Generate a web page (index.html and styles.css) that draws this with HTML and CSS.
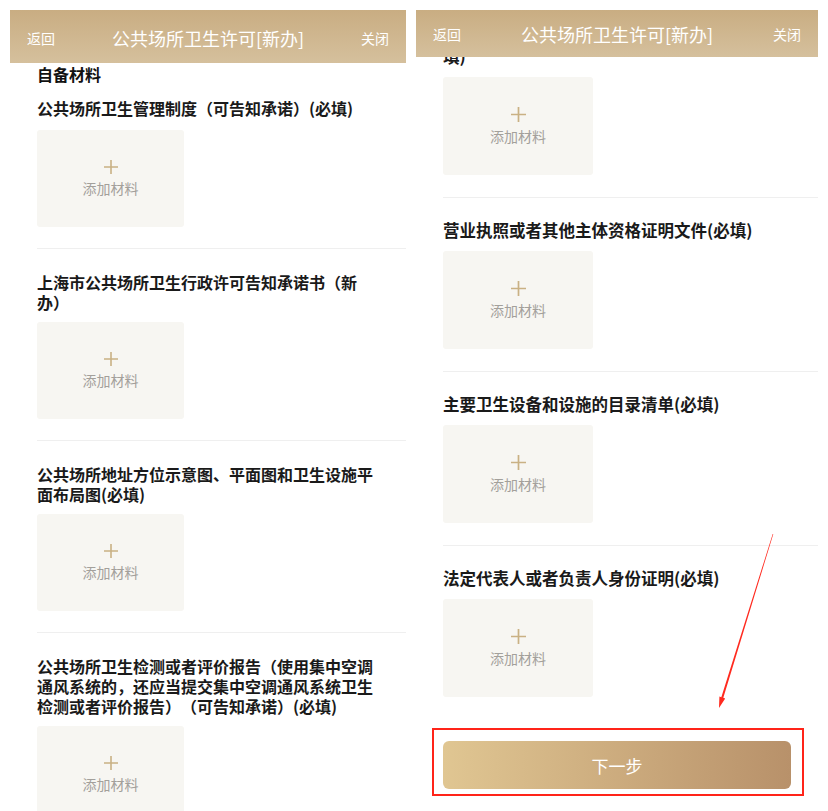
FILE: index.html
```html
<!DOCTYPE html>
<html lang="zh-CN">
<head>
    <meta charset="UTF-8">
    <meta name="viewport" content="width=device-width, initial-scale=1.0">
    <title>公共场所卫生许可[新办]</title>
    <link rel="stylesheet" href="styles.css">
</head>
<body>

<div class="page">

    <section class="phone phone-a">
        <header class="nav">
            <span class="nav-link">返回</span>
            <span class="nav-title">公共场所卫生许可[新办]</span>
            <span class="nav-link nav-right">关闭</span>
        </header>

        <div class="screen">
            <h2 class="group-title">自备材料</h2>

            <div class="item">
                <div class="item-title">公共场所卫生管理制度（可告知承诺）(必填)</div>
                <div class="upload"><svg class="plus" viewBox="0 0 14 14"><path d="M7 0V14M0 7H14"/></svg><span>添加材料</span></div>
            </div>

            <div class="item">
                <div class="item-title">上海市公共场所卫生行政许可告知承诺书（新办）</div>
                <div class="upload"><svg class="plus" viewBox="0 0 14 14"><path d="M7 0V14M0 7H14"/></svg><span>添加材料</span></div>
            </div>

            <div class="item">
                <div class="item-title">公共场所地址方位示意图、平面图和卫生设施平面布局图(必填)</div>
                <div class="upload"><svg class="plus" viewBox="0 0 14 14"><path d="M7 0V14M0 7H14"/></svg><span>添加材料</span></div>
            </div>

            <div class="item">
                <div class="item-title">公共场所卫生检测或者评价报告（使用集中空调通风系统的，还应当提交集中空调通风系统卫生检测或者评价报告）（可告知承诺）(必填)</div>
                <div class="upload"><svg class="plus" viewBox="0 0 14 14"><path d="M7 0V14M0 7H14"/></svg><span>添加材料</span></div>
            </div>
        </div>
    </section>

    <section class="phone phone-b">
        <header class="nav">
            <span class="nav-link">返回</span>
            <span class="nav-title">公共场所卫生许可[新办]</span>
            <span class="nav-link nav-right">关闭</span>
        </header>

        <div class="screen">
            <div class="item item-cut">
                <div class="item-title">填)</div>
                <div class="upload"><svg class="plus" viewBox="0 0 14 14"><path d="M7 0V14M0 7H14"/></svg><span>添加材料</span></div>
            </div>

            <div class="item">
                <div class="item-title">营业执照或者其他主体资格证明文件(必填)</div>
                <div class="upload"><svg class="plus" viewBox="0 0 14 14"><path d="M7 0V14M0 7H14"/></svg><span>添加材料</span></div>
            </div>

            <div class="item">
                <div class="item-title">主要卫生设备和设施的目录清单(必填)</div>
                <div class="upload"><svg class="plus" viewBox="0 0 14 14"><path d="M7 0V14M0 7H14"/></svg><span>添加材料</span></div>
            </div>

            <div class="item item-last">
                <div class="item-title">法定代表人或者负责人身份证明(必填)</div>
                <div class="upload"><svg class="plus" viewBox="0 0 14 14"><path d="M7 0V14M0 7H14"/></svg><span>添加材料</span></div>
            </div>

            <div class="next-wrap">
                <button class="next-btn">下一步</button>
            </div>
        </div>

        <!-- red annotation arrow -->
        <svg class="arrow" viewBox="0 0 402 801">
            <polygon points="357.3,524.1 307.3,687.8 309.2,688.4 303,698 303.4,686.6 305.3,687.2 356.7,523.9"/>
        </svg>
    </section>

</div>

</body>
</html>
```

FILE: styles.css
```css
body {
    margin: 0;
    background: #fff;
    font-family: "Noto Sans CJK SC", "Noto Sans", sans-serif;
    text-spacing-trim: space-all;
    overflow: hidden;
}

.page {
    display: flex;
    gap: 10px;
    height: 811px;
    padding: 10px 10px 0 10px;
    box-sizing: border-box;
}

.phone {
    position: relative;
    display: flex;
    flex-direction: column;
    overflow: hidden;
    background: #fff;
}

.phone-a { width: 396px; }
.phone-b { width: 402px; }

/* nav bar */
.nav {
    flex: none;
    display: grid;
    grid-template-columns: 1fr auto 1fr;
    align-items: center;
    padding: 0 17px;
    background: linear-gradient(#c9ad82, #d5c09d);
    color: #fff;
}

.phone-a .nav { height: 53px; padding-top: 3px; box-sizing: border-box; }
.phone-b .nav { height: 47px; }

.nav-link {
    font-size: 14px;
}

.nav-right {
    text-align: right;
}

.nav-title {
    font-size: 18px;
}

/* content */
.screen {
    flex: 1;
    overflow: hidden;
    padding-left: 27px;
}

.group-title {
    margin: 0;
    padding-top: 1px;
    font-size: 16px;
    line-height: 20px;
    font-weight: 700;
    color: #111;
}

.item {
    padding: 23px 0 21px 0;
    border-bottom: 1px solid #efefef;
}

.group-title + .item {
    padding-top: 14px;
}

.item-title {
    width: 342px;
    font-size: 16px;
    line-height: 20px;
    font-weight: 700;
    color: #1a1a1a;
}

.group-title + .item .upload {
    margin-top: 12px;
}

.upload {
    margin-top: 10px;
    width: 147px;
    height: 97px;
    border-radius: 3px;
    background: #f7f6f2;
    display: flex;
    flex-direction: column;
    align-items: center;
    justify-content: center;
    gap: 4px;
    font-size: 14px;
    line-height: 20px;
    color: #a3a09b;
}

.plus {
    width: 14px;
    height: 14px;
    stroke: #c9b184;
    stroke-width: 1.6;
    fill: none;
}

/* right screen is a little larger */
.phone-b .item {
    padding: 22px 0 22px 0;
}

.phone-b .item-title {
    font-size: 16.5px;
}

.phone-b .upload {
    margin-top: 11px;
    width: 150px;
    height: 98px;
}

.phone-b .plus {
    width: 15px;
    height: 15px;
}

.phone-b .item-cut {
    margin-top: -11px;
    padding-top: 0;
}

.phone-b .item-last {
    border-bottom: none;
}

.next-wrap {
    margin: 9px 0 0 -11px;
    width: 372px;
    box-sizing: border-box;
    border: 2px solid #ff2419;
    padding: 11px 11px 5px 9px;
}

.next-btn {
    display: block;
    width: 348px;
    height: 48px;
    border: none;
    border-radius: 6px;
    background: linear-gradient(90deg, #e0c692, #b8916a);
    color: #fff;
    font-family: inherit;
    font-size: 17px;
    cursor: pointer;
}

.arrow {
    position: absolute;
    left: 0;
    top: 0;
    width: 402px;
    height: 801px;
    pointer-events: none;
    fill: #ff2a1f;
}
```
